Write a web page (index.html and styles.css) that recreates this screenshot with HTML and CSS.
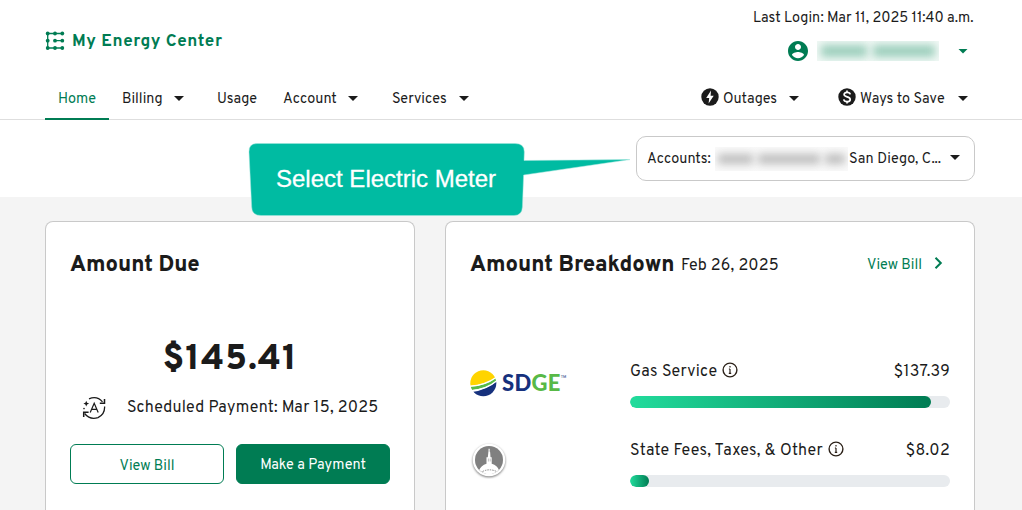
FILE: index.html
```html
<!DOCTYPE html>
<html lang="en">
<head>
<meta charset="utf-8">
<title>My Energy Center</title>
<link rel="stylesheet" href="styles.css">
</head>
<body>
<header class="header">
  <div class="brand-row">
    <div class="brand">
      <svg class="brand-icon" width="20" height="20" viewBox="0 0 20 20" fill="#007c53" stroke="#007c53"><path d="M2.700 2.500h14.600M2.700 17h14.600M2.700 2.500v14.500M10 9.700h7.500" fill="none" stroke-width="1.300"/><g stroke="none"><circle cx="2.700" cy="2.500" r="1.900"/><circle cx="10" cy="2.500" r="1.900"/><circle cx="17.300" cy="2.500" r="1.900"/><circle cx="2.700" cy="9.700" r="1.900"/><circle cx="10" cy="9.700" r="1.900"/><circle cx="17.300" cy="9.700" r="1.900"/><circle cx="2.700" cy="17" r="1.900"/><circle cx="10" cy="17" r="1.900"/><circle cx="17.300" cy="17" r="1.900"/></g></svg>
      <span class="brand-name">My Energy Center</span>
    </div>
    <div class="session">
      <div class="last-login">Last Login: Mar 11, 2025 11:40 a.m.</div>
      <div class="user">
        <svg class="user-icon" width="24" height="24" viewBox="0 0 24 24" fill="#007c53"><path d="M12 2C6.480 2 2 6.480 2 12s4.480 10 10 10 10-4.480 10-10S17.520 2 12 2zm0 3c1.660 0 3 1.340 3 3s-1.340 3-3 3-3-1.340-3-3 1.340-3 3-3zm0 14.200c-2.500 0-4.710-1.280-6-3.220.03-1.990 4-3.080 6-3.080 1.990 0 5.970 1.090 6 3.080-1.290 1.940-3.500 3.220-6 3.220z"/></svg>
        <div class="masked masked-user"><i class="m1"></i><i class="m2"></i></div>
        <span class="caret"></span>
      </div>
    </div>
  </div>
  <nav class="nav">
    <a class="nav-item active"><span>Home</span></a>
    <a class="nav-item billing"><span>Billing</span><span class="caret"></span></a>
    <a class="nav-item usage"><span>Usage</span></a>
    <a class="nav-item account"><span>Account</span><span class="caret"></span></a>
    <a class="nav-item services"><span>Services</span><span class="caret"></span></a>
    <a class="nav-item outages"><svg class="nav-icon" width="18" height="18" viewBox="0 0 18 18"><circle cx="9" cy="9" r="8.700" fill="#1b1b1b"/><path d="M10 2.500 5.200 10h3l-.6 5.500L12.700 7.800H9.600z" fill="#fff"/></svg><span>Outages</span><span class="caret"></span></a>
    <a class="nav-item ways"><svg class="nav-icon" width="18" height="18" viewBox="0 0 18 18"><circle cx="9" cy="9" r="8.700" fill="#1b1b1b"/><path d="M12.200 6.400C11.900 4.900 10.600 4.400 9 4.400c-1.700 0-2.900.8-2.900 2.200C6.100 9.700 12.200 8.100 12.200 11.400c0 1.400-1.300 2.300-3.100 2.300-1.700 0-3.100-.7-3.400-2.300M9 2.500v2M9 13.600v2" fill="none" stroke="#fff" stroke-width="1.700"/></svg><span>Ways to Save</span><span class="caret"></span></a>
  </nav>
</header>
<section class="selector-band">
  <div class="account-select">
    <span class="accounts-label">Accounts:</span>
    <div class="masked masked-address"><i class="m1"></i><i class="m2"></i><i class="m3"></i></div>
    <span class="city">San Diego, C...</span>
    <span class="caret"></span>
  </div>
  <div class="callout">
    <svg class="callout-shape" width="384" height="74" viewBox="0 0 384 74"><path d="M9 1.500H267Q276.500 1.500 276.300 10L276 18.500 382 17.600 275.600 33 274.400 65Q274 73.500 266 73.500H13Q4 73.500 3.700 65L1 10Q.7 1.500 9 1.500Z" fill="#00bba2" stroke="#a2e5dc" stroke-width=".5"/></svg>
    <span class="callout-text">Select Electric Meter</span>
  </div>
</section>
<main class="cards">
  <section class="card due">
    <h2>Amount Due</h2>
    <div class="total">$145.41</div>
    <div class="scheduled">
      <svg width="24" height="24" viewBox="0 0 24 24" fill="none" stroke="#1b1b1b" stroke-width="1.300"><path d="M7 2.800Q15-.6 20.500 5.800M22.600 10.500Q23 18.500 16 21.600 8 24.300 2.600 17.500"/><path d="M22.500 3v4.300h-4.700M1.700 21v-4.700h4.900" stroke-width="1.500"/><path d="m8.200 16.500 4-9.200 4 9.200M9.500 13.300h5.400" stroke-width="1.200"/><path d="m4.200 4.700.9 2 2 .8-2 .9-.9 2-.8-2-2-.9 2-.8z" fill="#1b1b1b" stroke="none"/><circle cx="2" cy="12.600" r=".8" fill="#1b1b1b" stroke="none"/></svg>
      <span>Scheduled Payment: Mar 15, 2025</span>
    </div>
    <div class="actions">
      <a class="button outline">View Bill</a>
      <a class="button solid">Make a Payment</a>
    </div>
  </section>
  <section class="card breakdown">
    <div class="breakdown-head">
      <h2>Amount Breakdown</h2>
      <span class="date">Feb 26, 2025</span>
      <a class="view-bill">View Bill</a>
      <svg width="10" height="14" viewBox="0 0 10 14" fill="none" stroke="#007c53" stroke-width="2"><path d="m1.500 1.700 5.300 5.300-5.300 5.300"/></svg>
    </div>
    <div class="charge gas">
      <div class="provider sdge">
        <svg width="27" height="27" viewBox="0 0 27 27"><defs><clipPath id="globe"><circle cx="13.300" cy="13.300" r="13"/></clipPath></defs><g clip-path="url(#globe)"><path d="M0 0h27v7Q15 15 0 16z" fill="#ffd400"/><path d="M0 16.800Q16 16 26 8v3Q17 19 1.500 20z" fill="#58b947"/><path d="M2 22Q17 20 27 11v16H2z" fill="#16317d"/></g><path d="M0 16.200Q15 15.200 26 7.500M1 20.800Q17 19 26.500 11" fill="none" stroke="#fff" stroke-width="1.200"/></svg>
        <span class="wordmark"><b>SD</b><b class="ge">GE</b></span><span class="tm">TM</span>
      </div>
      <div class="charge-body">
        <div class="charge-line"><span>Gas Service</span><svg class="info" width="16" height="16" viewBox="0 0 16 16"><circle cx="8" cy="8" r="6.900" fill="none" stroke="#2b2118" stroke-width="1.400"/><path d="M8 4v1.500M8 7v4.300M6.900 7H8M6.800 11.300h2.400" stroke="#2b2118" stroke-width="1.200"/></svg><span class="price">$137.39</span></div>
        <div class="bar"><div class="fill" style="width:94.1%"></div></div>
      </div>
    </div>
    <div class="charge fees">
      <div class="provider seal">
        <svg width="38" height="38" viewBox="0 0 38 38"><circle cx="19" cy="19" r="16.300" fill="#fff" class="seal-ring"/><circle cx="19" cy="19" r="14" fill="#808080"/><path d="M9.200 29Q11 24.500 16.500 22.700V16.300h1.300l.5-4.500.3-4h1l.6 4 .3 4.500h1.200v6.400Q27.500 24.500 28.900 29 19 37.500 9.200 29" fill="#fff"/><path d="M18.400 17.500v3M20.200 17.500v3M18.300 10h2" stroke="#999" stroke-width=".6"/><path d="M12.500 30.500Q19 27.300 26 30.200" fill="none" stroke="#888" stroke-width="1" stroke-dasharray="1.500 1"/></svg>
      </div>
      <div class="charge-body">
        <div class="charge-line"><span>State Fees, Taxes, &amp; Other</span><svg class="info" width="16" height="16" viewBox="0 0 16 16"><circle cx="8" cy="8" r="6.900" fill="none" stroke="#2b2118" stroke-width="1.400"/><path d="M8 4v1.500M8 7v4.300M6.900 7H8M6.800 11.300h2.400" stroke="#2b2118" stroke-width="1.200"/></svg><span class="price">$8.02</span></div>
        <div class="bar"><div class="fill" style="width:5.9%"></div></div>
      </div>
    </div>
  </section>
</main>
</body>
</html>
```
FILE: styles.css
```css
* { box-sizing: border-box; }
body {
  margin: 0;
  height: 510px;
  overflow: hidden;
  background: #f4f4f4;
  color: #1b1b1b;
  font: 14.4px/20px Overpass, Roboto, sans-serif;
  letter-spacing: 0;
  white-space: nowrap;
}
h2 { margin: 0; padding-top: 2px; font-size: 22px; line-height: 28px; font-weight: 800; letter-spacing: 0; }
.caret { width: 10px; height: 5px; background: currentColor; clip-path: polygon(0 0, 100% 0, 50% 100%); flex: none; }

.header { height: 120px; background: #fff; border-bottom: 1px solid #dedede; }
.brand-row { display: flex; justify-content: space-between; height: 78px; padding: 0 47px 0 45px; }
.brand { display: flex; align-items: center; gap: 7px; height: 20px; margin-top: 31px; color: #007c53; }
.brand-name { padding-top: 2px; font-size: 17px; font-weight: 700; letter-spacing: .56px; }
.session { width: 222px; padding-top: 9px; }
.user { display: flex; align-items: center; height: 24px; margin-top: 10px; padding: 0 7px 0 33px; color: #007c53; }
.masked-user { margin-left: 7px; width: 122px; height: 20px; }
.user .caret { margin-left: auto; }
.masked { display: flex; align-items: center; overflow: hidden; }
.masked i { height: 10px; filter: blur(4px); }
.masked-user { background: #f2f9f6; padding-left: 4px; gap: 6px; }
.masked-user i { height: 12px; background: #9bcebb; }
.masked-user .m1 { width: 46px; }
.masked-user .m2 { width: 62px; }

.nav { display: flex; height: 42px; padding-left: 45px; }
.nav-item { display: flex; align-items: center; height: 42px; padding-bottom: 1px; }
.nav-item > span:not(.caret) { padding-top: 2px; }
.active { width: 64px; justify-content: center; color: #007c53; border-bottom: 2px solid #007c53; padding: 1px 0 0; }
.billing { width: 62px; margin-left: 13px; }
.usage { width: 41px; margin-left: 33px; }
.account { width: 75px; margin-left: 25px; }
.services { width: 77px; margin-left: 34px; }
.outages { width: 98px; margin-left: 232px; }
.ways { width: 130px; margin-left: 39px; }
.nav-item .caret { margin-left: auto; }
.nav-icon { margin: -3px 4px 0 0; flex: none; }

.selector-band { position: relative; display: flex; justify-content: flex-end; height: 77px; padding: 16px 47px 0; background: #fff; }
.account-select { display: flex; align-items: center; width: 339px; height: 45px; padding: 0 14px 2px 10px; border: 1px solid #c9c9c9; border-radius: 10px; }
.accounts-label { width: 68px; padding-top: 4px; }
.masked-address { width: 133px; height: 24px; margin-top: 2px; background: #fafafa; padding-left: 3px; gap: 5px; }
.masked-address i { background: #bcbcbc; }
.masked-address .m1 { width: 35px; }
.masked-address .m2 { width: 62px; }
.masked-address .m3 { width: 20px; }
.city { margin-left: 1px; padding-top: 4px; letter-spacing: .1px; }
.account-select .caret { margin-left: auto; }
.callout { position: absolute; z-index: 1; left: 248px; top: 22px; width: 384px; height: 74px; }
.callout-shape { display: block; }
.callout-text { position: absolute; left: 28px; top: 21px; color: #fff; font: 24px/32px "Liberation Sans", Arial, sans-serif; letter-spacing: 0; -webkit-text-stroke: .3px #fff; }

.cards { display: flex; gap: 30px; padding: 24px 47px 0 45px; }
.card { height: 289px; background: #fff; border: 1px solid #c9c9c9; border-bottom: 0; border-radius: 8px 8px 0 0; padding: 28px 24px 0; }
.due { width: 370px; }
.breakdown { width: 530px; }
.total { margin-top: 58px; font-size: 36px; line-height: 44px; font-weight: 800; text-align: center; letter-spacing: .8px; }
.scheduled { display: flex; align-items: center; height: 24px; margin-top: 14px; padding-left: 12px; font-size: 16px; letter-spacing: .21px; }
.scheduled span { margin-left: 21px; }
.actions { display: flex; gap: 12px; margin-top: 24px; }
.button { display: flex; align-items: center; justify-content: center; width: 154px; height: 40px; border-radius: 6px; border: 1px solid #007c53; color: #007c53; }
.outline { padding-top: 5px; }
.solid { padding-top: 3px; background: #007c53; color: #fff; }
.breakdown-head { display: flex; align-items: center; height: 30px; margin-bottom: -2px; }
.breakdown-head h2 { width: 203px; }
.date { margin-left: 8px; padding-top: 2px; font-size: 16px; letter-spacing: .2px; }
.view-bill { margin-left: auto; padding-top: 1px; color: #007c53; }
.breakdown-head svg { margin: -4px 6px 0 12px; }
.charge { display: flex; height: 79px; }
.gas { margin-top: 82px; }
.fees { height: 68px; }
.provider { width: 160px; }
.sdge { display: flex; align-items: flex-start; padding-top: 10px; }
.wordmark { margin: 3px 0 0 5px; color: #16317d; font: 900 22px/20px Lato, sans-serif; letter-spacing: .3px; }
.wordmark b { font-weight: 900; }
.wordmark .ge { color: #58b947; }
.tm { margin-top: 5px; color: #16317d; font-size: 4px; line-height: 5px; }
.seal { padding-top: 2px; }
.seal-ring { filter: drop-shadow(0 1px 1px #777); }
.charge-body { width: 320px; }
.charge-line { display: flex; align-items: center; height: 20px; font-size: 16px; letter-spacing: .3px; }
.charge-line span { padding-top: 4px; }
.info { margin-left: 5px; }
.price { margin-left: auto; }
.bar { margin-top: 16px; height: 12px; border-radius: 6px; background: #e8ebee; overflow: hidden; }
.fill { height: 12px; border-radius: 6px; background: linear-gradient(90deg, #22dc9c, #007c53); }
```
